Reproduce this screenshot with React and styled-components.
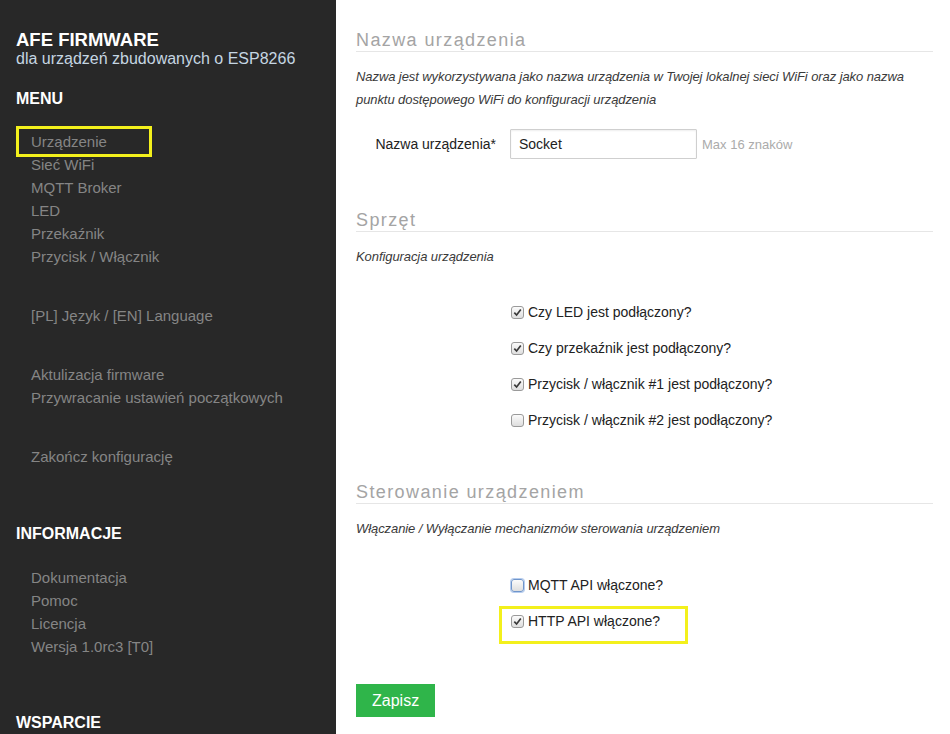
import React from 'react';
import styled, { createGlobalStyle } from 'styled-components';

const GlobalStyle = createGlobalStyle`
  html, body {
    margin: 0;
    padding: 0;
    background: #fff;
    font-family: "Liberation Sans", Arial, sans-serif;
  }
  *, *::before, *::after {
    box-sizing: border-box;
  }
`;

const MARK = '#f3f01c';

const Page = styled.div`
  display: flex;
  min-height: 100vh;
`;

const Sidebar = styled.nav`
  width: 336px;
  flex-shrink: 0;
  background: #282828;
  padding: 30px 16px 0;
  display: flex;
  flex-direction: column;
`;

const Brand = styled.h1`
  margin: 0;
  font-size: 18.5px;
  line-height: 20px;
  font-weight: bold;
  color: #fff;
`;

const BrandSub = styled.p`
  margin: 0;
  font-size: 16px;
  line-height: 18px;
  color: #c5d6e2;
`;

const SectionTitle = styled.h2`
  margin: ${props => props.$top}px 0 0;
  font-size: 16px;
  line-height: 20px;
  font-weight: bold;
  color: #fff;
`;

const NavList = styled.ul`
  list-style: none;
  margin: ${props => props.$top}px 0 0;
  padding: 0 0 0 15px;
`;

const NavItem = styled.li`
  position: relative;
  font-size: 15px;
  line-height: 23px;
  color: #858585;

  ${props =>
    props.$marked &&
    `
    &::after {
      content: '';
      position: absolute;
      left: -15px;
      top: -4px;
      width: 136px;
      height: 31px;
      border: 3px solid ${MARK};
    }
  `}
`;

const Main = styled.main`
  flex: 1;
  padding: 29px 17px 40px 20px;
  color: #333;
`;

const Legend = styled.h3`
  margin: ${props => props.$top || 0}px 0 0;
  font-size: 18px;
  line-height: 22px;
  font-weight: normal;
  letter-spacing: 1.4px;
  color: #a4a4a4;
  border-bottom: 1px solid #e6e6e6;
`;

const Hint = styled.p`
  margin: 13px 0 0;
  font-size: 13px;
  line-height: 23px;
  font-style: italic;
  letter-spacing: -0.08px;
  color: #3a3a3a;
`;

const ControlGroup = styled.div`
  display: flex;
  align-items: center;
  margin-top: 18px;
`;

const FieldLabel = styled.label`
  width: 140px;
  margin-right: 14px;
  text-align: right;
  font-size: 14px;
  color: #222;
`;

const TextInput = styled.input`
  width: 187px;
  height: 30px;
  padding: 0 8px;
  border: 1px solid #cfcfcf;
  border-radius: 1px;
  box-shadow: inset 0 1px 2px #eee;
  font-family: inherit;
  font-size: 14px;
  color: #222;
  outline: none;
`;

const FieldMessage = styled.span`
  margin-left: 5px;
  font-size: 13px;
  color: #ababab;
`;

const CheckList = styled.div`
  display: flex;
  flex-direction: column;
  gap: 16px;
  margin-top: ${props => props.$top}px;
  padding-left: 154px;
`;

const CheckRow = styled.label`
  position: relative;
  display: flex;
  align-items: center;
  gap: 4px;
  height: 20px;
  font-size: 14px;
  color: #222;

  ${props =>
    props.$marked &&
    `
    &::after {
      content: '';
      position: absolute;
      left: -11px;
      top: -5px;
      width: 189px;
      height: 38px;
      border: 3px solid ${MARK};
    }
  `}
`;

const Box = styled.span`
  width: 13px;
  height: 13px;
  margin-left: 1px;
  border: 1px solid ${props => (props.$focus ? '#6f95cb' : '#9a9a9a')};
  border-radius: 3px;
  background: linear-gradient(#fbfbfb, #dedede);
  box-shadow: ${props => (props.$focus ? '0 0 0 1px #b7cdee' : 'none')};
  display: flex;
  align-items: center;
  justify-content: center;
`;

const SaveButton = styled.button`
  margin-top: 53px;
  padding: 0 16px;
  height: 33px;
  border: none;
  background: #2fb54a;
  color: #fff;
  font-family: inherit;
  font-size: 16px;
`;

function Check({ checked, focus, marked, children }) {
  return (
    <CheckRow $marked={marked}>
      <Box $focus={focus}>
        {checked && (
          <svg width="9" height="9" viewBox="0 0 9 9">
            <path d="M1.3 4.6 L3.6 7 L7.8 1.6" fill="none" stroke="#3a3a3a" strokeWidth="1.7" />
          </svg>
        )}
      </Box>
      {children}
    </CheckRow>
  );
}

export default function App() {
  return (
    <Page>
      <GlobalStyle />
      <Sidebar>
        <Brand>AFE FIRMWARE</Brand>
        <BrandSub>dla urządzeń zbudowanych o ESP8266</BrandSub>

        <SectionTitle $top={21}>MENU</SectionTitle>
        <NavList $top={21}>
          <NavItem $marked>Urządzenie</NavItem>
          <NavItem>Sieć WiFi</NavItem>
          <NavItem>MQTT Broker</NavItem>
          <NavItem>LED</NavItem>
          <NavItem>Przekaźnik</NavItem>
          <NavItem>Przycisk / Włącznik</NavItem>
        </NavList>
        <NavList $top={36}>
          <NavItem>[PL] Język / [EN] Language</NavItem>
        </NavList>
        <NavList $top={36}>
          <NavItem>Aktulizacja firmware</NavItem>
          <NavItem>Przywracanie ustawień początkowych</NavItem>
        </NavList>
        <NavList $top={36}>
          <NavItem>Zakończ konfigurację</NavItem>
        </NavList>

        <SectionTitle $top={56}>INFORMACJE</SectionTitle>
        <NavList $top={22}>
          <NavItem>Dokumentacja</NavItem>
          <NavItem>Pomoc</NavItem>
          <NavItem>Licencja</NavItem>
          <NavItem>Wersja 1.0rc3 [T0]</NavItem>
        </NavList>

        <SectionTitle $top={55}>WSPARCIE</SectionTitle>
      </Sidebar>

      <Main>
        <Legend>Nazwa urządzenia</Legend>
        <Hint>
          Nazwa jest wykorzystywana jako nazwa urządzenia w Twojej lokalnej sieci WiFi oraz jako nazwa
          punktu dostępowego WiFi do konfiguracji urządzenia
        </Hint>
        <ControlGroup>
          <FieldLabel>Nazwa urządzenia*</FieldLabel>
          <TextInput defaultValue="Socket" />
          <FieldMessage>Max 16 znaków</FieldMessage>
        </ControlGroup>

        <Legend $top={50}>Sprzęt</Legend>
        <Hint>Konfiguracja urządzenia</Hint>
        <CheckList $top={34}>
          <Check checked>Czy LED jest podłączony?</Check>
          <Check checked>Czy przekaźnik jest podłączony?</Check>
          <Check checked>Przycisk / włącznik #1 jest podłączony?</Check>
          <Check>Przycisk / włącznik #2 jest podłączony?</Check>
        </CheckList>

        <Legend $top={51}>Sterowanie urządzeniem</Legend>
        <Hint>Włączanie / Wyłączanie mechanizmów sterowania urządzeniem</Hint>
        <CheckList $top={35}>
          <Check focus>MQTT API włączone?</Check>
          <Check checked marked>HTTP API włączone?</Check>
        </CheckList>

        <SaveButton>Zapisz</SaveButton>
      </Main>
    </Page>
  );
}
